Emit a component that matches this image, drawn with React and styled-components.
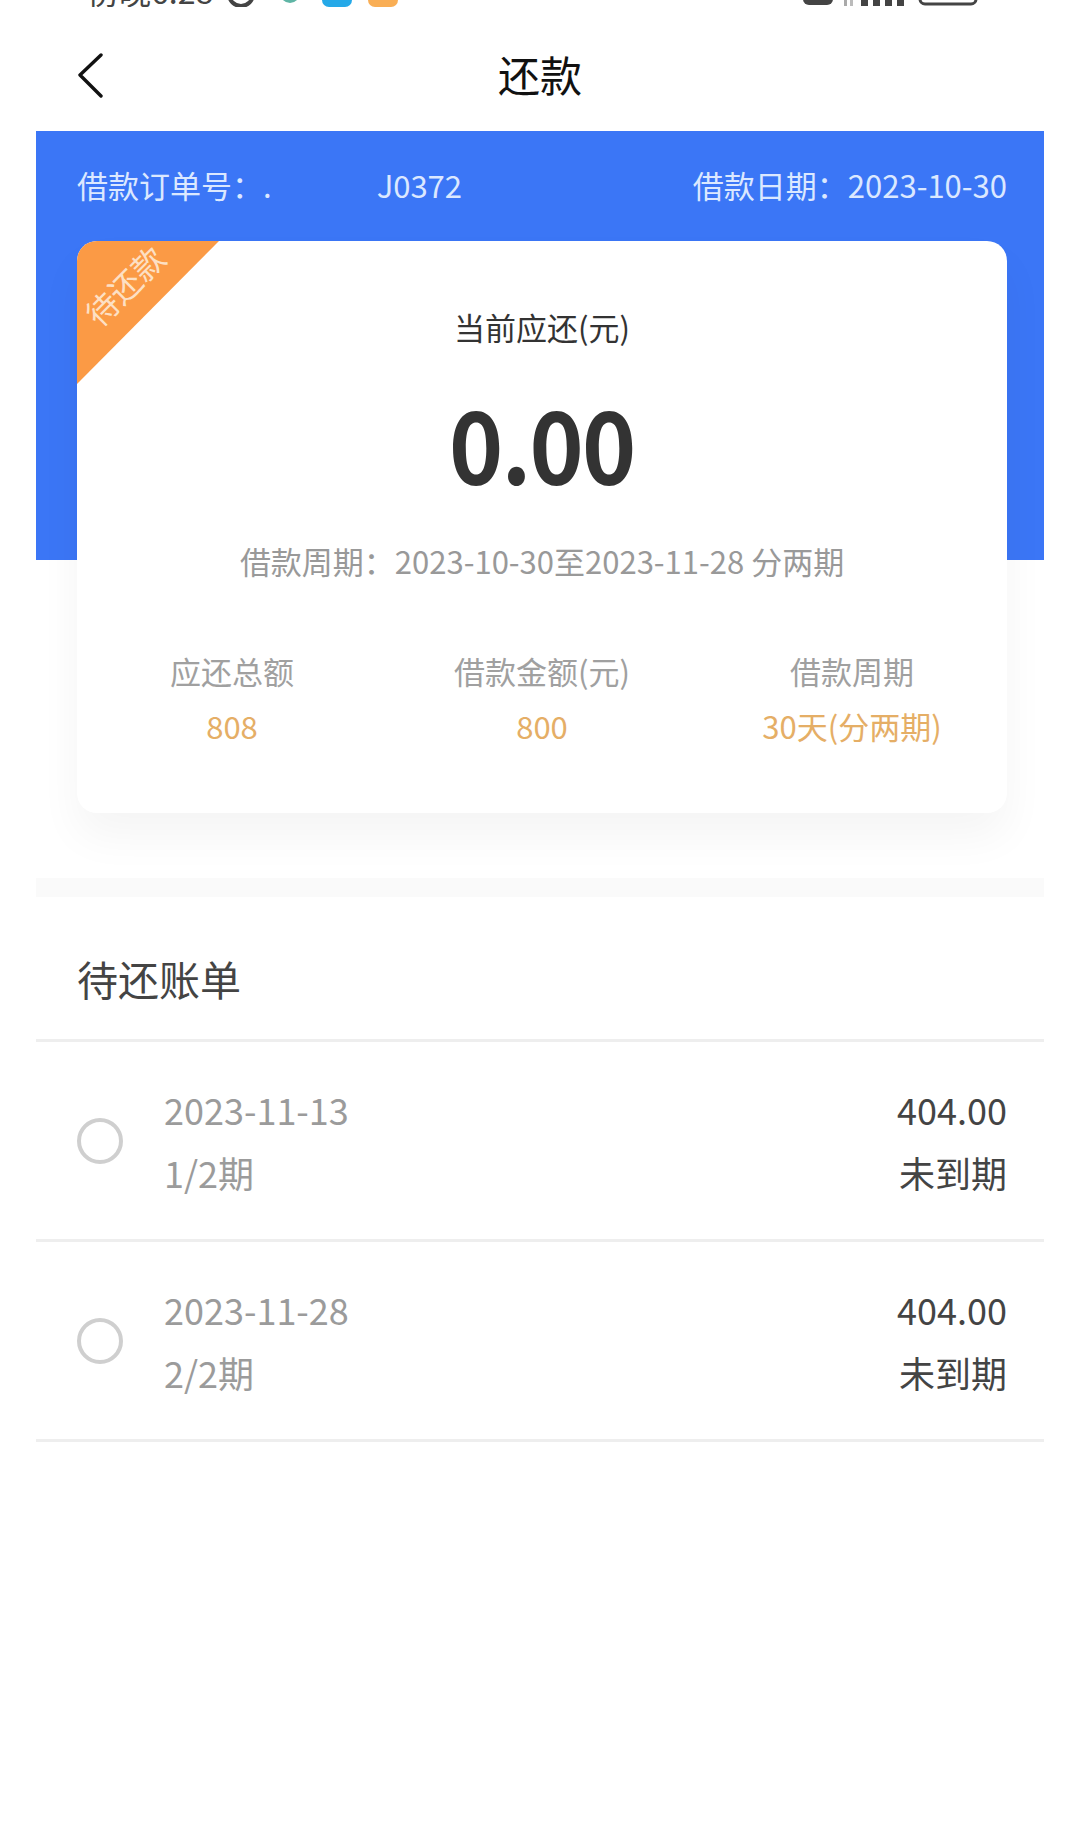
import React from "react";
import styled, { createGlobalStyle } from "styled-components";

const Global = createGlobalStyle`
  html, body { margin: 0; padding: 0; background: #fff; }
  body { font-family: "Noto Sans CJK SC", "Noto Sans", sans-serif; }
`;

const Page = styled.div`
  width: 1080px;
  height: 1826px;
  overflow: hidden;
  background: #fff;
  display: flex;
  flex-direction: column;
`;

const StatusBar = styled.div`
  height: 7px;
  overflow: hidden;
  display: flex;
  justify-content: space-between;
  padding: 0 98px 0 87px;
  flex: none;
`;
const StatusGroup = styled.div`
  display: flex;
  align-items: flex-start;
  height: 7px;
`;
const StatusTime = styled.span`
  font-size: 32px;
  line-height: 32px;
  margin-top: -26px;
  color: #444;
  width: 135px;
  white-space: nowrap;
`;

const NavBar = styled.header`
  height: 124px;
  flex: none;
  position: relative;
  display: flex;
  align-items: center;
  justify-content: center;
`;
const BackButton = styled.svg`
  position: absolute;
  left: 76px;
  top: 45px;
`;
const NavTitle = styled.h1`
  margin: 0;
  font-size: 42px;
  line-height: 56px;
  font-weight: 400;
  color: #111;
  transform: translate(0, 5px);
`;

const Content = styled.div`
  margin: 0 36px;
  display: flex;
  flex-direction: column;
`;

const Hero = styled.section`
  height: 429px;
  background: #3b76f6;
  padding: 0 37px 0 41px;
  display: flex;
  flex-direction: column;
`;
const HeroRow = styled.div`
  height: 106px;
  margin-bottom: 4px;
  flex: none;
  display: flex;
  justify-content: space-between;
  align-items: center;
  color: #dbe8ff;
  font-size: 31px;
  white-space: pre;
`;
const MaskedGap = styled.span`
  margin-left: 105px;
`;
const Card = styled.div`
  position: relative;
  height: 572px;
  flex: none;
  background: #fff;
  border-radius: 20px;
  box-shadow: 0 24px 44px rgba(0, 0, 0, 0.045);
  display: flex;
  flex-direction: column;
  align-items: center;
`;
const Ribbon = styled.div`
  position: absolute;
  left: 0;
  top: 0;
  width: 142px;
  height: 143px;
  background: #fb9a45;
  border-top-left-radius: 20px;
  clip-path: polygon(0 0, 100% 0, 0 100%);
`;
const RibbonText = styled.span`
  position: absolute;
  left: -3px;
  top: 26px;
  width: 100px;
  text-align: center;
  color: #fde0c4;
  font-size: 32px;
  line-height: 36px;
  white-space: nowrap;
  transform: rotate(-45deg);
`;
const CardLabel = styled.div`
  margin-top: 64px;
  font-size: 31px;
  line-height: 44px;
  color: #333;
`;
const Amount = styled.div`
  margin-top: 33px;
  font-size: 100px;
  line-height: 120px;
  font-weight: 700;
  color: #333;
  letter-spacing: -2px;
  transform: scaleX(0.92);
`;
const Period = styled.div`
  margin-top: 37px;
  font-size: 31px;
  line-height: 44px;
  color: #999;
`;
const Stats = styled.div`
  margin-top: 66px;
  align-self: stretch;
  display: grid;
  grid-template-columns: repeat(3, 1fr);
`;
const Stat = styled.div`
  display: flex;
  flex-direction: column;
  align-items: center;
  gap: 11px;
`;
const StatLabel = styled.div`
  font-size: 31px;
  line-height: 44px;
  color: #a0a0a0;
`;
const StatValue = styled.div`
  font-size: 31px;
  line-height: 44px;
  color: #e5ae66;
`;

const Spacer = styled.div`
  height: 318px;
  flex: none;
`;
const SectionGap = styled.div`
  height: 19px;
  background: #fafafa;
  flex: none;
`;
const SectionTitle = styled.h2`
  margin: 0;
  height: 145px;
  box-sizing: border-box;
  padding: 20px 37px 0 41px;
  display: flex;
  align-items: center;
  font-size: 41px;
  font-weight: 400;
  color: #444;
  border-bottom: 3px solid #eeeeee;
`;
const BillRow = styled.div`
  height: 200px;
  box-sizing: border-box;
  padding: 0 37px 0 41px;
  display: flex;
  align-items: center;
  border-bottom: 3px solid #eeeeee;
`;
const Radio = styled.span`
  width: 46px;
  height: 46px;
  box-sizing: border-box;
  border: 4px solid #cfcfcf;
  border-radius: 50%;
  flex: none;
`;
const BillLeft = styled.div`
  margin-left: 41px;
  display: flex;
  flex-direction: column;
  gap: 13px;
  flex: 1;
`;
const BillRight = styled.div`
  display: flex;
  flex-direction: column;
  gap: 13px;
  align-items: flex-end;
`;
const BillText = styled.div`
  font-size: 36px;
  line-height: 50px;
  color: ${(p) => (p.$dark ? "#444" : "#9b9b9b")};
`;

const COLON = "\uFF1A";
const bills = [
  { date: "2023-11-13", term: "1/2期" },
  { date: "2023-11-28", term: "2/2期" },
];
const stats = [
  ["应还总额", "808"],
  ["借款金额(元)", "800"],
  ["借款周期", "30天(分两期)"],
];

export default function App() {
  return (
    <Page>
      <Global />
      <StatusBar>
        <StatusGroup>
          <StatusTime>傍晚6:28</StatusTime>
          <svg width="190" height="7" viewBox="0 0 190 7">
            <circle cx="19" cy="-6" r="12" fill="none" stroke="#444" strokeWidth="4" />
            <circle cx="68" cy="-7" r="10" fill="#5fb5a5" />
            <rect x="100" y="-20" width="30" height="27" rx="7" fill="#25a9e8" />
            <rect x="146" y="-20" width="30" height="27" rx="7" fill="#f9ae55" />
          </svg>
        </StatusGroup>
        <StatusGroup>
          <svg width="180" height="7" viewBox="0 0 180 7">
            <rect x="1" y="-20" width="30" height="25" rx="6" fill="#444" />
            <rect x="42" y="0" width="3" height="6" fill="#aaa" />
            <rect x="48" y="0" width="3" height="6" fill="#bbb" />
            <rect x="59" y="0" width="7" height="6" fill="#444" />
            <rect x="71" y="0" width="7" height="6" fill="#444" />
            <rect x="83" y="0" width="7" height="6" fill="#444" />
            <rect x="95" y="0" width="7" height="6" fill="#444" />
            <rect x="118" y="-20" width="56" height="24" rx="5" fill="none" stroke="#444" strokeWidth="3" />
          </svg>
        </StatusGroup>
      </StatusBar>
      <NavBar>
        <BackButton width="30" height="46" viewBox="0 0 30 46" fill="none">
          <path d="M25 3 L4 23 L25 44" stroke="#111" strokeWidth="3.4" strokeLinecap="round" strokeLinejoin="round" />
        </BackButton>
        <NavTitle>还款</NavTitle>
      </NavBar>
      <Content>
        <Hero>
          <HeroRow>
            <span>
              {`借款订单号${COLON}.`}
              <MaskedGap>J0372</MaskedGap>
            </span>
            <span>{`借款日期${COLON}2023-10-30`}</span>
          </HeroRow>
          <Card>
            <Ribbon />
            <RibbonText>待还款</RibbonText>
            <CardLabel>当前应还(元)</CardLabel>
            <Amount>0.00</Amount>
            <Period>{`借款周期${COLON}2023-10-30至2023-11-28 分两期`}</Period>
            <Stats>
              {stats.map(([label, value]) => (
                <Stat key={label}>
                  <StatLabel>{label}</StatLabel>
                  <StatValue>{value}</StatValue>
                </Stat>
              ))}
            </Stats>
          </Card>
        </Hero>
        <Spacer />
        <SectionGap />
        <SectionTitle>待还账单</SectionTitle>
        {bills.map((b) => (
          <BillRow key={b.date}>
            <Radio />
            <BillLeft>
              <BillText>{b.date}</BillText>
              <BillText>{b.term}</BillText>
            </BillLeft>
            <BillRight>
              <BillText $dark>404.00</BillText>
              <BillText $dark>未到期</BillText>
            </BillRight>
          </BillRow>
        ))}
      </Content>
    </Page>
  );
}
